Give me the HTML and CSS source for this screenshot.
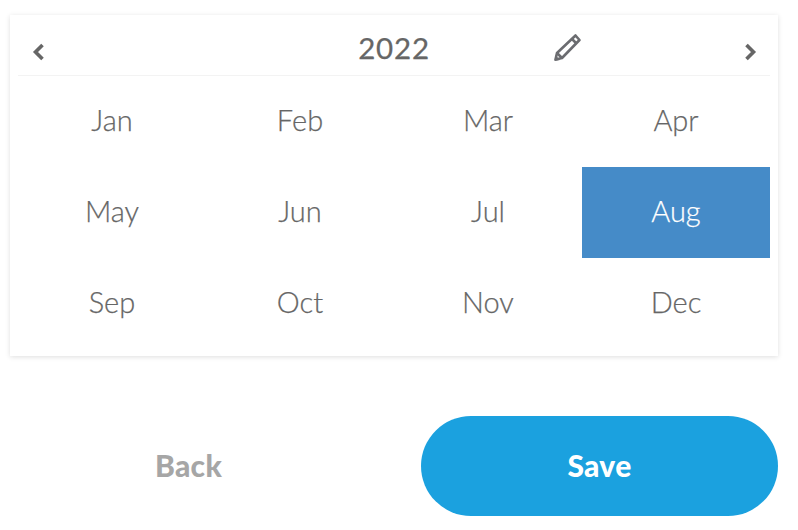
FILE: index.html
```html
<!DOCTYPE html>
<html lang="en">
<head>
<meta charset="utf-8">
<title>Month picker</title>
<link rel="stylesheet" href="styles.css">
</head>
<body>
<div class="page">
  <section class="card">
    <header class="head">
      <button class="nav" aria-label="Previous year">
        <svg width="12" height="18" viewBox="0 0 12 18"><path d="M10.500 2 3.500 9l7 7" fill="none" stroke="#666" stroke-width="3.600"/></svg>
      </button>
      <div class="year">2022</div>
      <svg class="pencil" width="30" height="30" viewBox="0 0 30 30"><g fill="none" stroke="#6b6c70" stroke-width="2.600" stroke-linejoin="round"><path d="M3.500 27.500l1.500-6.500L23.500 3.500l4 4.500L10 26z"/><path d="M5 21l5 5M20 7l4.500 4.500"/></g><path d="M2.500 29l1-5.500 4.500 4.500z" fill="#6b6c70"/></svg>
      <button class="nav" aria-label="Next year">
        <svg width="12" height="18" viewBox="0 0 12 18"><path d="M1.500 2 8.500 9l-7 7" fill="none" stroke="#666" stroke-width="3.600"/></svg>
      </button>
    </header>
    <div class="months">
      <div class="month">Jan</div><div class="month">Feb</div><div class="month">Mar</div><div class="month">Apr</div>
      <div class="month">May</div><div class="month">Jun</div><div class="month">Jul</div><div class="month selected">Aug</div>
      <div class="month">Sep</div><div class="month">Oct</div><div class="month">Nov</div><div class="month">Dec</div>
    </div>
  </section>
  <div class="actions">
    <button class="btn back">Back</button>
    <button class="btn save">Save</button>
  </div>
</div>
</body>
</html>
```
FILE: styles.css
```css
* { box-sizing: border-box; }
html, body { margin: 0; background: #fff; }
body { font-family: "Lato", "Liberation Sans", sans-serif; color: #666; }
.page { width: 798px; height: 530px; padding: 15px 20px 0 10px; }
.card {
  height: 341px;
  padding: 0 8px 7px;
  background: #fff;
  box-shadow: 0 1px 5px rgba(0,0,0,.13);
}
.head {
  height: 61px;
  position: relative;
  display: flex;
  align-items: center;
  justify-content: space-between;
  padding: 13px 6px 0 7px;
  border-bottom: 1px solid #f3f3f3;
}
.nav { border: 0; background: none; padding: 0; display: flex; width: 12px; margin: 0 7px; }
.year {
  position: absolute;
  left: 0;
  width: 752px;
  text-align: center;
  top: 15px;
  font-size: 29.500px;
  line-height: 36px;
  font-weight: 400;
  letter-spacing: .8px;
  -webkit-text-stroke: .25px #666;
  color: #666;
}
.pencil { position: absolute; left: 534px; top: 17px; }
.months {
  display: grid;
  grid-template-columns: repeat(4, 188px);
  grid-auto-rows: 91px;
}
.month {
  display: flex;
  align-items: center;
  justify-content: center;
  font-size: 29px;
  font-weight: 300;
  padding-bottom: 4px;
  color: #666;
  -webkit-text-stroke: .25px #666;
}
.selected { background: #458bc8; color: #fff; -webkit-text-stroke: .25px #fff; }
.actions {
  display: flex;
  justify-content: space-between;
  margin-top: 60px;
}
.btn {
  width: 357px;
  height: 100px;
  border: 0;
  border-radius: 50px;
  font-family: inherit;
  font-size: 30px;
  font-weight: 900;
  letter-spacing: .3px;
  padding: 0 0 2px;
}
.back { background: none; color: #a6a6a6; }
.save { background: #1ba1df; color: #fff; }
```
